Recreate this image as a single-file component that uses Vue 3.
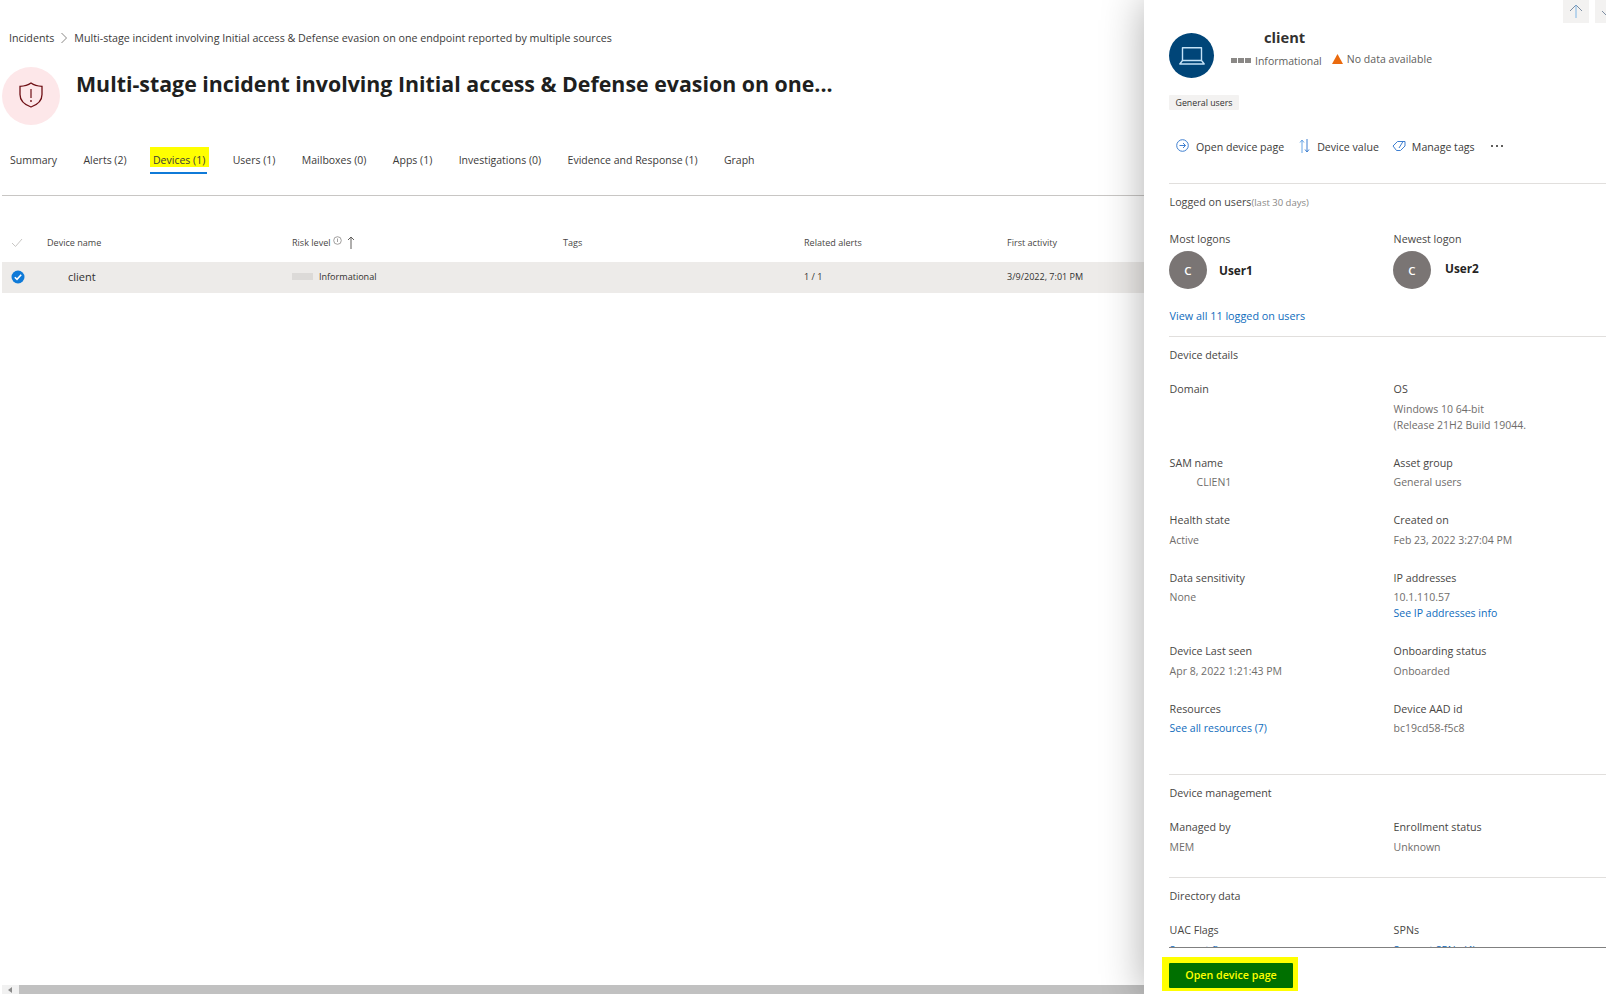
<script setup>
const tabs = ['Summary', 'Alerts (2)', 'Devices (1)', 'Users (1)', 'Mailboxes (0)', 'Apps (1)', 'Investigations (0)', 'Evidence and Response (1)', 'Graph']
const details = [
  { label: 'Domain', lines: [] },
  { label: 'OS', lines: ['Windows 10 64-bit', '(Release 21H2 Build 19044.'] },
  { label: 'SAM name', lines: ['CLIEN1'], indent: true },
  { label: 'Asset group', lines: ['General users'] },
  { label: 'Health state', lines: ['Active'] },
  { label: 'Created on', lines: ['Feb 23, 2022 3:27:04 PM'] },
  { label: 'Data sensitivity', lines: ['None'] },
  { label: 'IP addresses', lines: ['10.1.110.57'], link: 'See IP addresses info' },
  { label: 'Device Last seen', lines: ['Apr 8, 2022 1:21:43 PM'] },
  { label: 'Onboarding status', lines: ['Onboarded'] },
  { label: 'Resources', lines: [], link: 'See all resources (7)' },
  { label: 'Device AAD id', lines: ['bc19cd58-f5c8'] },
]
const management = [
  { label: 'Managed by', lines: ['MEM'] },
  { label: 'Enrollment status', lines: ['Unknown'] },
]
const directory = [
  { label: 'UAC Flags', lines: [], link: 'Support flags' },
  { label: 'SPNs', lines: [], link: 'Support SPNs (4)' },
]
</script>

<template>
  <div class="page">
    <main class="main">
      <nav class="crumbs">
        <span>Incidents</span>
        <svg class="crumb-sep" width="8" height="12" viewBox="0 0 8 12"><path d="M1.5 1l5 5-5 5" fill="none" stroke="#8a8886" stroke-width="1"/></svg>
        <span>Multi-stage incident involving Initial access &amp; Defense evasion on one endpoint reported by multiple sources</span>
      </nav>
      <header class="head">
        <div class="shield">
          <svg width="24" height="26" viewBox="0 0 24 26"><path d="M12 1c2.800 2 6.200 3.100 11 3.300v8.200c0 5.600-4 10-11 12.500C5 22.500 1 18.100 1 12.500V4.300C5.800 4.100 9.200 3 12 1z" fill="none" stroke="#6e0f14" stroke-width="1.300"/><path d="M12 7v9" stroke="#6e0f14" stroke-width="1.200"/><circle cx="12" cy="19" r=".9" fill="#6e0f14"/></svg>
        </div>
        <h1>Multi-stage incident involving Initial access &amp; Defense evasion on one...</h1>
      </header>
      <div class="tabs">
        <div v-for="t in tabs" :key="t" class="tab" :class="{ active: t === 'Devices (1)' }"><span>{{ t }}</span></div>
      </div>
      <div class="thead cols">
        <svg class="check-head" width="12" height="10" viewBox="0 0 12 10"><path d="M1 5l3.500 3.500L11 1" fill="none" stroke="#c8c6c4" stroke-width="1"/></svg>
        <span>Device name</span>
        <span class="risk-head">Risk level
          <svg class="info" width="9" height="9" viewBox="0 0 9 9"><circle cx="4.500" cy="4.500" r="3.800" fill="none" stroke="#8a8886" stroke-width=".8"/><path d="M4.500 2.500v3.500" stroke="#8a8886" stroke-width=".8"/></svg>
          <svg class="sort" width="8" height="13" viewBox="0 0 8 13"><path d="M4 13V1M1 4l3-3 3 3" fill="none" stroke="#605e5c" stroke-width="1"/></svg>
        </span>
        <span>Tags</span>
        <span>Related alerts</span>
        <span>First activity</span>
      </div>
      <div class="trow cols">
        <svg class="check-on" width="14" height="14" viewBox="0 0 14 14"><circle cx="7" cy="7" r="6.500" fill="#0f7ad8"/><path d="M3.800 7.200l2.200 2.200 4.200-4.600" fill="none" stroke="#fff" stroke-width="1.600"/></svg>
        <span class="client">client</span>
        <span class="risk"><i class="bars"></i>Informational</span>
        <span></span>
        <span>1 / 1</span>
        <span>3/9/2022, 7:01 PM</span>
      </div>
      <div class="spacer"></div>
      <div class="hscroll">
        <span class="arrow"></span>
        <span class="thumb"></span>
      </div>
    </main>

    <aside class="panel">
      <div class="pager">
        <button class="pg">
          <svg width="14" height="14" viewBox="0 0 14 14"><path d="M1 7l6-6 6 6" fill="none" stroke="#7d8ea3" stroke-width="1"/><path d="M7 1v13" stroke="#7fb6e6" stroke-width="1"/></svg>
        </button>
        <button class="pg">
          <svg width="14" height="14" viewBox="0 0 14 14"><path d="M1 7l6 6 6-6" fill="none" stroke="#7d8ea3" stroke-width="1"/><path d="M7 0v13" stroke="#7fb6e6" stroke-width="1"/></svg>
        </button>
      </div>
      <div class="scrollarea">
        <div class="identity">
          <div class="avatar">
            <svg width="26" height="18" viewBox="0 0 26 18"><path d="M3.500.8h19v12.700h-19zM3.500 13.500L.8 17h24.400l-2.700-3.500" fill="none" stroke="#c4e2f7" stroke-width="1.400" stroke-linejoin="round"/></svg>
          </div>
          <div class="idtext">
            <div class="name">client</div>
            <div class="meta">
              <span class="meta-risk"><i class="dots3"><b></b><b></b><b></b></i>Informational</span>
              <svg class="warn" width="11" height="10" viewBox="0 0 11 10"><path d="M5.500 0L11 10H0z" fill="#ea6a0e"/></svg>
              <span class="nodata">No data available</span>
            </div>
          </div>
        </div>
        <div class="tag">General users</div>
        <div class="actions">
          <span class="act act1">
            <svg width="13" height="13" viewBox="0 0 13 13"><circle cx="6.500" cy="6.500" r="5.800" fill="none" stroke="#3f7fd0" stroke-width="1"/><path d="M3.500 6.500h6M7 4l2.500 2.500L7 9" fill="none" stroke="#3f7fd0" stroke-width="1"/></svg>
            Open device page
          </span>
          <span class="act act2">
            <svg width="11" height="14" viewBox="0 0 11 14"><path d="M3 14V1M1 3.500L3 1l2 2.500" fill="none" stroke="#69a6e6" stroke-width="1"/><path d="M8 0v13M6 10.500L8 13l2-2.500" fill="none" stroke="#3f7fd0" stroke-width="1"/></svg>
            Device value
          </span>
          <span class="act act3">
            <svg width="14" height="12" viewBox="0 0 14 12"><path d="M1 6l4.500-4.500H13V6l-4.500 4.500h-4z" fill="none" stroke="#3f7fd0" stroke-width="1"/><path d="M7 8l4-6.500" stroke="#3f7fd0" stroke-width="1"/></svg>
            Manage tags
          </span>
          <span class="more"><i></i><i></i><i></i></span>
        </div>

        <section class="sec sec-users">
          <div class="sec-head">
            <span>Logged on users<small>(last 30 days)</small></span>
            <svg class="chev" width="10" height="6" viewBox="0 0 10 6"><path d="M1 5l4-4 4 4" fill="none" stroke="#0078d4" stroke-width="1"/></svg>
          </div>
          <div class="two logons">
            <div>
              <div class="lbl">Most logons</div>
              <div class="user"><span class="ini">C</span><b>User1</b></div>
            </div>
            <div>
              <div class="lbl">Newest logon</div>
              <div class="user user2"><span class="ini">C</span><b>User2</b></div>
            </div>
          </div>
          <a class="link viewall">View all 11 logged on users</a>
        </section>

        <section class="sec sec-details">
          <div class="sec-head">
            <span>Device details</span>
            <svg class="chev" width="10" height="6" viewBox="0 0 10 6"><path d="M1 5l4-4 4 4" fill="none" stroke="#0078d4" stroke-width="1"/></svg>
          </div>
          <div class="two fields">
            <div v-for="f in details" :key="f.label">
              <div class="lbl">{{ f.label }}</div>
              <div v-for="l in f.lines" :key="l" class="val" :class="{ indent: f.indent }">{{ l }}</div>
              <a v-if="f.link" class="link val">{{ f.link }}</a>
            </div>
          </div>
        </section>

        <section class="sec sec-mgmt">
          <div class="sec-head">
            <span>Device management</span>
            <svg class="chev" width="10" height="6" viewBox="0 0 10 6"><path d="M1 5l4-4 4 4" fill="none" stroke="#0078d4" stroke-width="1"/></svg>
          </div>
          <div class="two fields">
            <div v-for="f in management" :key="f.label">
              <div class="lbl">{{ f.label }}</div>
              <div v-for="l in f.lines" :key="l" class="val">{{ l }}</div>
            </div>
          </div>
        </section>

        <section class="sec sec-dir">
          <div class="sec-head">
            <span>Directory data</span>
            <svg class="chev" width="10" height="6" viewBox="0 0 10 6"><path d="M1 5l4-4 4 4" fill="none" stroke="#0078d4" stroke-width="1"/></svg>
          </div>
          <div class="two fields">
            <div v-for="f in directory" :key="f.label">
              <div class="lbl">{{ f.label }}</div>
              <a class="link val">{{ f.link }}</a>
            </div>
          </div>
        </section>
      </div>
      <div class="foot">
        <div class="cta-mark"><button class="cta">Open device page</button></div>
      </div>
    </aside>
  </div>
</template>

<style>
html, body { margin: 0; background: #fff; overflow: hidden; }
</style>

<style scoped>
.page {
  position: relative;
  width: 1606px;
  height: 994px;
  overflow: hidden;
  background: #fff;
  font-family: "Open Sans", "Noto Sans", sans-serif;
  color: #323130;
  font-size: 11px;
}
.main {
  width: 1144px;
  height: 994px;
  display: flex;
  flex-direction: column;
}
.crumbs {
  display: flex;
  align-items: center;
  gap: 6px;
  height: 16px;
  margin: 30px 0 0 9px;
  font-size: 10.700px;
  color: #3b3a39;
}
.head {
  display: flex;
  margin: 21px 0 0 2px;
  height: 58px;
}
.shield {
  width: 58px;
  height: 58px;
  border-radius: 50%;
  background: #fde7e9;
  display: flex;
  align-items: center;
  justify-content: center;
  padding-bottom: 3px;
  box-sizing: border-box;
}
h1 {
  margin: 2px 0 0 16px;
  font-size: 21.350px;
  line-height: 30px;
  font-weight: 700;
  color: #201f1e;
  white-space: nowrap;
}
.tabs {
  display: flex;
  height: 70px;
  margin-left: 2px;
  border-bottom: 1px solid #c8c6c4;
  box-sizing: content-box;
  gap: 26.400px;
  padding-left: 8px;
  align-items: flex-start;
}
.tab {
  margin-top: 22px;
  height: 25px;
  font-size: 10.500px;
  line-height: 26px;
  color: #3b3a39;
  white-space: nowrap;
}
.tab.active {
  border-bottom: 2px solid #0f7ad8;
  margin-left: -3px;
  margin-right: -1px;
  padding-right: 1px;
}
.tab.active span {
  display: block;
  background: #ffff00;
  padding: 0 4px 0 3px;
  margin-right: -3px;
  height: 20px;
}
.cols {
  display: grid;
  grid-template-columns: 36px 245px 271px 241px 203px 1fr;
  align-items: center;
  margin-left: 2px;
  padding-left: 9px;
  box-sizing: border-box;
  width: 1142px;
}
.thead {
  margin-top: 38px;
  height: 19px;
  padding-bottom: 2px;
  font-size: 9.050px;
  color: #484644;
}
.check-head { justify-self: start; }
.risk-head { display: flex; align-items: center; gap: 2px; }
.info { margin-bottom: 4px; }
.sort { margin-left: 3px; }
.trow {
  margin-top: 9px;
  height: 31px;
  padding-bottom: 2px;
  background: #edebe9;
  font-size: 9.050px;
  color: #323130;
}
.client { font-size: 11px; padding-left: 21px; }
.risk { display: flex; align-items: center; gap: 6px; }
.bars {
  width: 21px;
  height: 7px;
  background: #dcdad8;
}
.spacer { flex: 1; }
.hscroll {
  height: 9px;
  margin-left: 2px;
  display: flex;
  background: #f1f1f1;
}
.arrow {
  width: 17px;
  position: relative;
}
.arrow::after {
  content: "";
  position: absolute;
  left: 6px;
  top: 2px;
  border-style: solid;
  border-width: 3px 4px 3px 0;
  border-color: transparent #8a8a8a transparent transparent;
}
.thumb { flex: 1; background: #c1c1c1; }

.panel {
  position: absolute;
  top: 0;
  right: 0;
  bottom: 0;
  width: 462px;
  background: #fff;
  box-shadow: 0 0 40px rgba(0, 0, 0, .32);
  display: flex;
  flex-direction: column;
  overflow: hidden;
}
.pager {
  display: flex;
  gap: 6px;
  height: 23px;
  padding-left: 419px;
  flex: none;
}
.pg {
  width: 26px;
  height: 23px;
  flex: none;
  border: 0;
  padding: 0;
  background: #f3f2f1;
  display: flex;
  align-items: center;
  justify-content: center;
}
.pg svg { margin-top: -1px; }
.scrollarea {
  margin-left: 25px;
  height: 925px;
  flex: none;
  overflow: hidden;
  border-bottom: 1px solid #808080;
  box-sizing: border-box;
}
.identity { display: flex; margin-top: 10px; height: 45px; }
.avatar {
  width: 45px;
  height: 45px;
  border-radius: 50%;
  background: #004578;
  display: flex;
  align-items: center;
  justify-content: center;
}
.idtext { margin-left: 17px; }
.name {
  margin-left: 33px;
  font-size: 14.700px;
  line-height: 20px;
  font-weight: 700;
  margin-top: -6px;
  color: #323130;
}
.meta { display: flex; align-items: center; height: 20px; margin-top: 2px; }
.meta-risk { display: flex; align-items: center; gap: 4px; font-size: 10.500px; color: #605e5c; margin-top: 3px; }
.dots3 { display: flex; gap: 1px; }
.dots3 b { width: 6px; height: 5px; background: #8a8886; }
.warn { margin-left: 10px; }
.nodata { margin-left: 4px; font-size: 10.500px; color: #605e5c; letter-spacing: .05px; }
.tag {
  margin-top: 17px;
  width: 70px;
  height: 15px;
  line-height: 16px;
  background: #f3f2f1;
  border-radius: 1px;
  font-size: 8.800px;
  text-align: center;
  color: #323130;
  white-space: nowrap;
}
.actions {
  display: flex;
  align-items: center;
  height: 20px;
  margin-top: 27px;
  padding-left: 7px;
  font-size: 10.600px;
  color: #3b3a39;
  white-space: nowrap;
}
.act { display: flex; align-items: center; gap: 7px; }
.act svg { margin-top: -3px; }
.act2 { margin-left: 15px; }
.act3 { margin-left: 13px; gap: 6px; }
.more { display: flex; gap: 3px; margin-left: 16px; margin-top: -3px; }
.more i { width: 2px; height: 2px; background: #605e5c; }

.sec { border-top: 1px solid #e1dfdd; }
.sec-users { margin-top: 26px; height: 152px; }
.sec-details { height: 437px; }
.sec-mgmt { height: 102px; }
.sec-head {
  display: flex;
  justify-content: space-between;
  align-items: center;
  height: 16px;
  margin-top: 10px;
  font-size: 10.700px;
  color: #484644;
}
.sec-head small { font-size: 9.500px; color: #8a8886; }
.chev { margin-right: -9px; }
.two {
  display: grid;
  grid-template-columns: 224px 1fr;
}
.logons { margin-top: 21px; }
.lbl {
  font-size: 10.700px;
  line-height: 16px;
  color: #484644;
  white-space: nowrap;
}
.sec-head, .fields .lbl, .fields .val, .logons .lbl, .viewall { padding-left: .6px; }
.user {
  display: flex;
  align-items: center;
  margin-top: 4px;
  height: 38px;
}
.ini {
  width: 38px;
  height: 38px;
  border-radius: 50%;
  background: #7a7574;
  color: #fff;
  font-weight: 600;
  font-size: 11.500px;
  display: flex;
  align-items: center;
  justify-content: center;
}
.user b { margin-left: 12px; font-size: 11.800px; font-weight: 700; color: #252423; }
.user2 b { margin-left: 14px; margin-top: -4px; }
.link { color: #0f6cbd; display: block; }
.viewall { margin-top: 19px; font-size: 10.800px; line-height: 16px; }
.fields { margin-top: 18px; row-gap: 22px; }
.val {
  font-size: 10.500px;
  line-height: 16px;
  color: #6f6d6b;
  white-space: nowrap;
}
.lbl + .val { margin-top: 3.500px; }
.val + .val { margin-top: 0; }
.val.link { color: #0f6cbd; }
.fields .val.indent { padding-left: 27.600px; }
.foot {
  height: 46px;
  flex: none;
  padding: 9px 0 0 18px;
  box-sizing: border-box;
}
.cta-mark {
  width: 136px;
  height: 34px;
  box-sizing: border-box;
  padding: 6px 5px 3px 7px;
  background: #ffff00;
}
.cta {
  display: block;
  width: 124px;
  height: 25px;
  border: 0;
  border-radius: 1px;
  padding: 0 0 2px;
  background: #007000;
  font-family: inherit;
  font-size: 10.700px;
  font-weight: 600;
  color: #ffff00;
}
</style>
